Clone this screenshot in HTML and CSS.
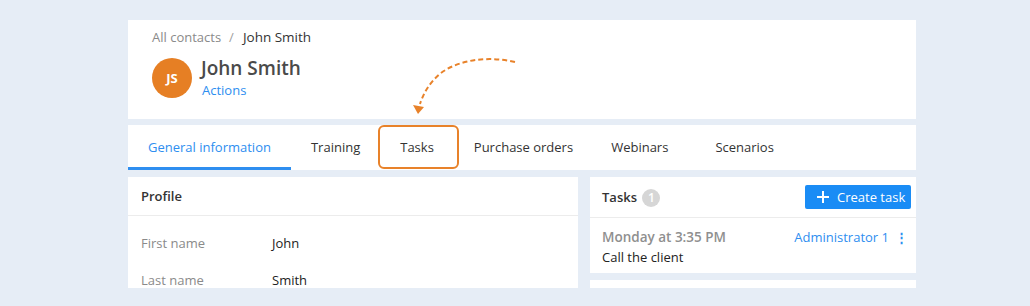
FILE: index.html
```html
<!DOCTYPE html>
<html lang="en">
<head>
  <meta charset="UTF-8" />
  <title>John Smith</title>
  <link rel="stylesheet" href="styles.css">
</head>
<body>
  <div class="frame">
    <div class="head-card">
      <div class="crumbs"><a href="#">All contacts</a><span class="sep">/</span><span class="current">John Smith</span></div>
      <div class="person">
        <div class="avatar">JS</div>
        <div>
          <div class="name">John Smith</div>
          <a href="#" class="actions">Actions</a>
        </div>
      </div>
      <!-- hint arrow pointing at the Tasks tab -->
      <svg class="hint-arrow" width="110" height="62" viewBox="0 0 110 62">
        <path d="M107 8 C 82 2, 52 5, 33 19 C 22 28, 16 38, 12 50" fill="none" stroke="#e8822a" stroke-width="2" stroke-dasharray="5 3"/>
        <polygon points="5,51 16,53 10,60" fill="#e8822a"/>
      </svg>
    </div>

    <nav class="tabs">
      <a href="#" class="tab active">General information</a>
      <a href="#" class="tab">Training</a>
      <a href="#" class="tab marked">Tasks</a>
      <a href="#" class="tab">Purchase orders</a>
      <a href="#" class="tab wide">Webinars</a>
      <a href="#" class="tab">Scenarios</a>
    </nav>

    <div class="columns">
      <div class="card">
        <div class="card-head">Profile</div>
        <div class="field"><span class="label">First name</span><span>John</span></div>
        <div class="field"><span class="label">Last name</span><span>Smith</span></div>
      </div>
      <div class="side">
        <div class="card">
          <div class="card-head split">
            <div>Tasks <span class="badge">1</span></div>
            <button class="btn">
              <svg width="12" height="12" viewBox="0 0 12 12"><path d="M6 0v12M0 6h12" stroke="#fff" stroke-width="2"/></svg>
              Create task
            </button>
          </div>
          <div class="task">
            <div class="task-top">
              <span class="when">Monday at 3:35 PM</span>
              <span class="who"><a href="#">Administrator 1</a><span class="dots">⋮</span></span>
            </div>
            <div>Call the client</div>
          </div>
        </div>
        <div class="card filler"></div>
      </div>
    </div>
  </div>
</body>
</html>
```

FILE: styles.css
```css
body {
  margin: 0;
  background: #e6edf6;
  font-family: 'Open Sans', sans-serif;
  font-size: 13px;
  color: #222;
}
a {
  text-decoration: none;
}
.frame {
  margin: 20px 0 0 128px;
  width: 788px;
  height: 268px;
  overflow: hidden;
}
.head-card {
  position: relative;
  background: #fff;
  height: 99px;
  padding: 8px 24px 0;
  box-sizing: border-box;
}
.crumbs {
  line-height: 18px;
  color: #333;
}
.crumbs a {
  color: #8a8a8a;
}
.current {
  font-size: 13.5px;
}
.sep {
  color: #a0a0a0;
  margin: 0 9px 0 8px;
}
.person {
  display: flex;
  align-items: center;
  gap: 9px;
  margin-top: 10px;
}
.avatar {
  width: 40px;
  height: 40px;
  border-radius: 50%;
  background: #e67f24;
  color: #fff;
  font-weight: 700;
  font-size: 13px;
  display: flex;
  align-items: center;
  justify-content: center;
}
.name {
  font-size: 19px;
  font-weight: 600;
  color: #4a4a4a;
  line-height: 24px;
}
.actions {
  color: #2e8ef0;
  line-height: 20px;
  margin-left: 1px;
}
.hint-arrow {
  position: absolute;
  left: 280px;
  top: 34px;
}
.tabs {
  display: flex;
  background: #fff;
  margin-top: 6px;
  height: 45px;
}
.tab {
  position: relative;
  padding: 0 20px;
  line-height: 45px;
  color: #333;
}
.tab.active {
  color: #2e8ef0;
}
.tab.active::after {
  content: "";
  position: absolute;
  left: 0;
  right: 0;
  bottom: 0;
  height: 3px;
  background: #2e8ef0;
}
.tab.marked::before {
  content: "";
  position: absolute;
  left: -2px;
  right: -5px;
  top: 0;
  bottom: 1px;
  border: 2px solid #e8822a;
  border-radius: 6px;
}
.tab.wide {
  padding-left: 18px;
  padding-right: 27px;
}
.columns {
  display: grid;
  grid-template-columns: 450px 326px;
  gap: 12px;
  margin-top: 7px;
}
.card {
  background: #fff;
}
.card-head {
  height: 38px;
  line-height: 38px;
  padding: 0 13px;
  font-weight: 600;
  color: #333;
  border-bottom: 1px solid #ececec;
}
.field {
  display: flex;
  padding-left: 13px;
  line-height: 20px;
  margin-top: 17px;
}
.label {
  width: 131px;
  color: #8a8a8a;
}
.side {
  display: flex;
  flex-direction: column;
  gap: 7px;
}
.card-head.split {
  display: flex;
  align-items: center;
  justify-content: space-between;
  padding: 0 5px 0 12px;
  height: 40px;
  line-height: normal;
}
.badge {
  display: inline-block;
  width: 18px;
  height: 18px;
  line-height: 18px;
  border-radius: 50%;
  background: #d6d6d6;
  color: #fff;
  text-align: center;
  font-size: 12px;
  margin-left: 2px;
}
.btn {
  display: flex;
  align-items: center;
  gap: 8px;
  height: 24px;
  width: 106px;
  padding: 0 0 0 12px;
  border: none;
  border-radius: 2px;
  background: #1a8cf5;
  color: #fff;
  font-family: inherit;
  font-size: 13px;
}
.task {
  padding: 9px 8px 6px 12px;
  line-height: 20px;
}
.task-top {
  display: flex;
  justify-content: space-between;
}
.when {
  color: #8f8f8f;
  font-weight: 600;
  font-size: 13.5px;
}
.who a {
  color: #2e8ef0;
  font-size: 13px;
}
.dots {
  color: #2e8ef0;
  margin-left: 6px;
  font-weight: 600;
}
.filler {
  height: 40px;
}
```
